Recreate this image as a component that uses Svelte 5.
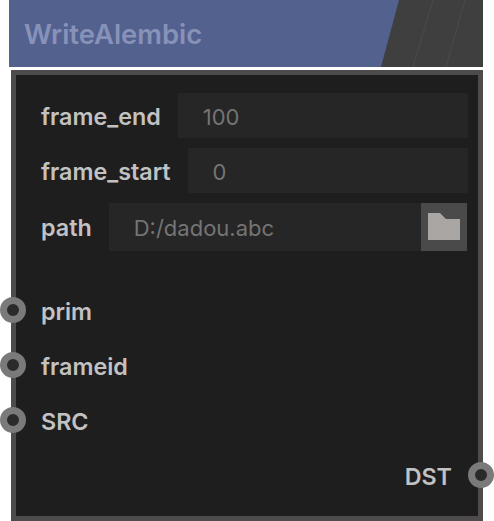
<script>
  const params = [
    { name: 'frame_end', value: '100' },
    { name: 'frame_start', value: '0' },
  ];
  const inputs = ['prim', 'frameid', 'SRC'];
</script>

<div class="node">
  <header>
    <div class="title">WriteAlembic</div>
    <svg class="stripes" width="84" height="67" viewBox="0 0 84 67">
      <path d="M14 67 L34 0 M47 67 L66 0" />
    </svg>
  </header>

  <div class="body">
    {#each params as p}
      <div class="row">
        <span class="label">{p.name}</span>
        <div class="field"><span>{p.value}</span></div>
      </div>
    {/each}
    <div class="row path">
      <span class="label">path</span>
      <div class="field"><span>D:/dadou.abc</span></div>
      <button aria-label="open folder">
        <svg width="32" height="27" viewBox="0 0 32 27">
          <path d="M0 0 H12 L18 6 H32 V27 H0 Z" />
        </svg>
      </button>
    </div>

    <div class="sockets">
      {#each inputs as name}
        <div class="socket-row">
          <i class="socket left"></i>
          <span class="label">{name}</span>
        </div>
      {/each}
      <div class="socket-row out">
        <span class="label">DST</span>
        <i class="socket right"></i>
      </div>
    </div>
  </div>
</div>

<style>
  :global(body) {
    background: #fff;
    overflow: hidden;
  }
  .node {
    width: 494px;
    height: 521px;
    font-family: Inter, 'Noto Sans', sans-serif;
    overflow: hidden;
  }
  header {
    position: relative;
    width: 474px;
    height: 67px;
    margin-left: 9px;
    background: #3f3f3f;
  }
  .title {
    height: 100%;
    padding-left: 15px;
    display: flex;
    align-items: center;
    box-sizing: border-box;
    background: #53618f;
    clip-path: polygon(0 0, 390px 0, 372px 100%, 0 100%);
    color: #8892b8;
    font-size: 27.4px;
    font-weight: 600;
  }
  .stripes {
    position: absolute;
    right: 0;
    top: 0;
  }
  .stripes path {
    stroke: #474747;
    stroke-width: 1.5;
    fill: none;
  }
  .body {
    box-sizing: border-box;
    width: 472px;
    height: 451.5px;
    margin: 2.5px 0 0 11px;
    padding: 18px 10px 0 25px;
    background: #1e1e1e;
    border: 5px solid #4d4b4b;
  }
  .row {
    display: flex;
    align-items: center;
    gap: 17px;
    height: 45px;
    margin-bottom: 10px;
  }
  .row.path {
    height: 48px;
    margin-bottom: 0;
  }
  .label {
    color: #c2c2c2;
    font-size: 23.3px;
    font-weight: 600;
    line-height: 1;
    padding-top: 3px;
  }
  .field {
    flex: 1;
    align-self: stretch;
    display: flex;
    align-items: center;
    padding-left: 25px;
    padding-top: 3px;
    background: #262626;
    color: #747474;
    font-size: 22px;
    font-weight: 400;
  }
  button {
    width: 46px;
    height: 48px;
    margin-left: -17px;
    margin-right: 1px;
    padding: 0;
    border: none;
    background: #4a4a4a;
    display: flex;
    align-items: center;
    justify-content: center;
  }
  button path {
    fill: #aaa6a3;
  }
  .sockets {
    margin-top: 37px;
  }
  .socket-row {
    position: relative;
    display: flex;
    align-items: center;
    height: 45px;
    margin-bottom: 10px;
  }
  .socket-row.out {
    justify-content: flex-end;
    padding-right: 16px;
  }
  .socket {
    position: absolute;
    box-sizing: border-box;
    width: 26px;
    height: 26px;
    border: 7px solid #7a7a7a;
    border-radius: 50%;
    background: #2a2a2a;
    top: 9px;
  }
  .left {
    left: -41px;
  }
  .right {
    right: -26px;
  }
</style>
